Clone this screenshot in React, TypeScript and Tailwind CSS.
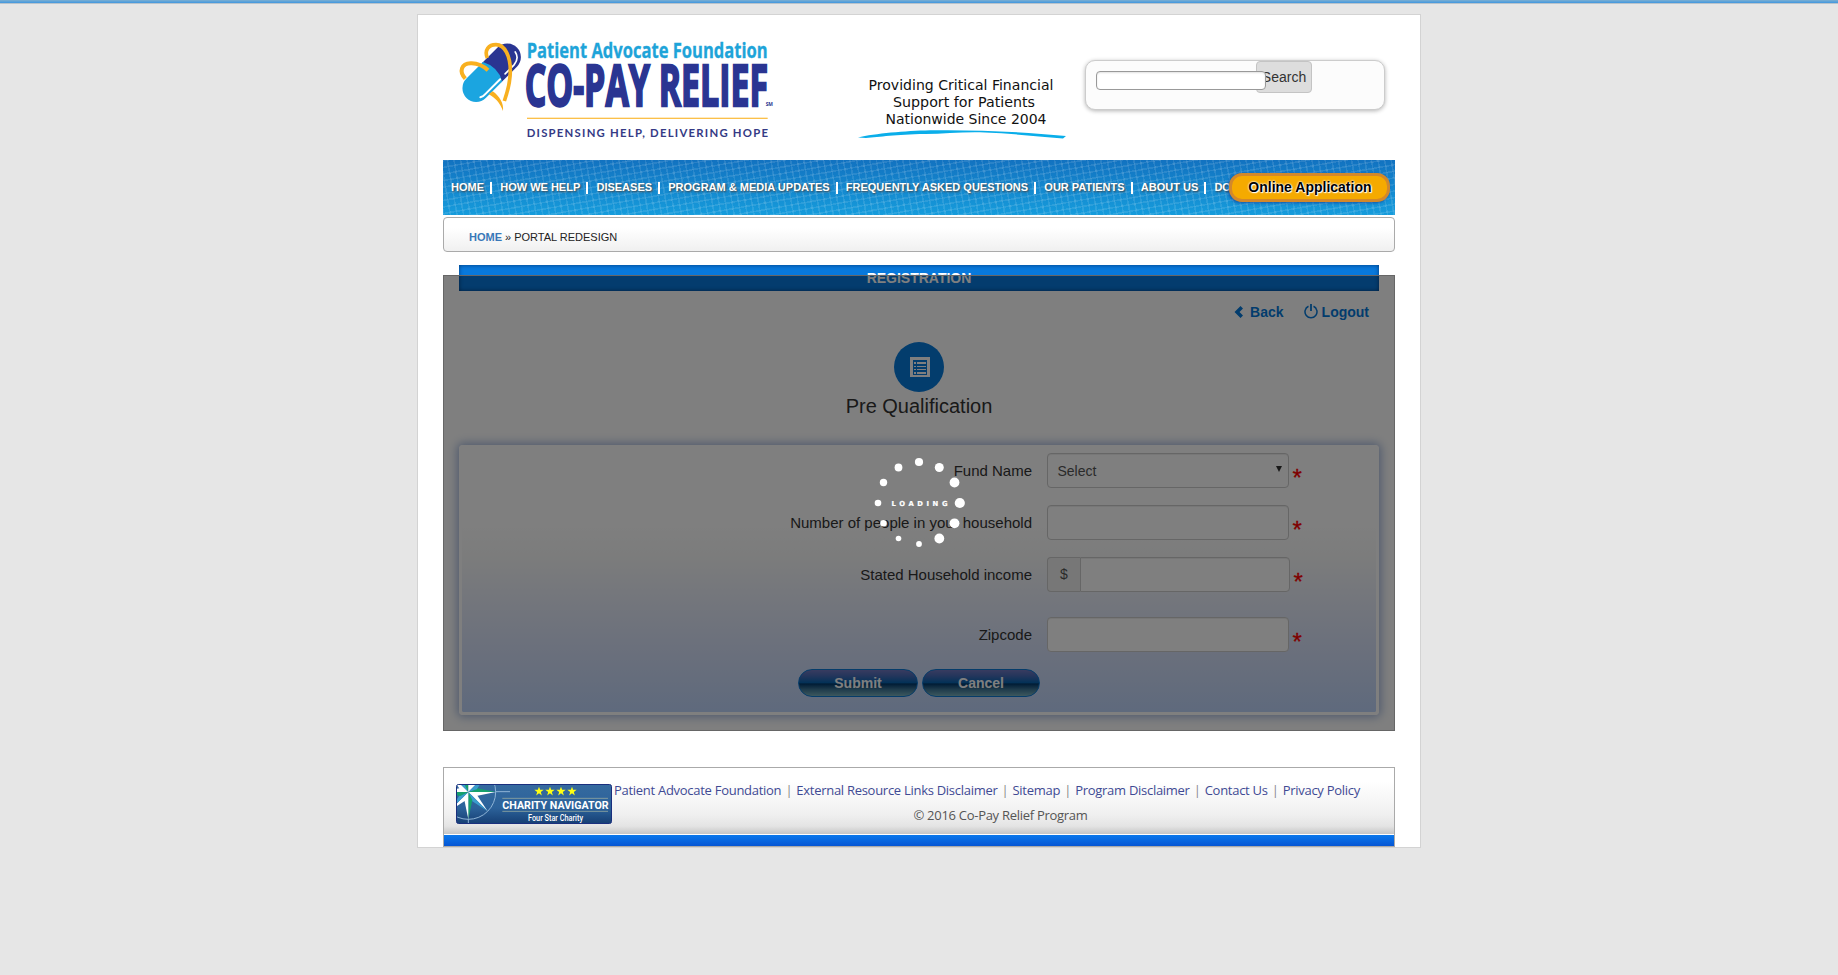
import React from "react";

const navItems: { label: string }[] = [
  { label: "HOME" },
  { label: "HOW WE HELP" },
  { label: "DISEASES" },
  { label: "PROGRAM & MEDIA UPDATES" },
  { label: "FREQUENTLY ASKED QUESTIONS" },
  { label: "OUR PATIENTS" },
  { label: "ABOUT US" },
  { label: "DO" },
];

const footerLinks = [
  "Patient Advocate Foundation",
  "External Resource Links Disclaimer",
  "Sitemap",
  "Program Disclaimer",
  "Contact Us",
  "Privacy Policy",
];

function Logo() {
  return (
    <svg width="320" height="100" viewBox="150 120 960 300" className="block shrink-0 overflow-visible">
      <g transform="translate(245 218) rotate(-45)">
        <path d="M0 -41 H66 A41 41 0 0 1 66 41 H0 Z" fill="#2a3592" />
        <path d="M4 -41 H-66 A41 41 0 0 0 -66 41 H4 Q26 0 4 -41Z" fill="#1ba5e0" />
        <path d="M-76 28 Q-68 33 -58 32 H4" stroke="#fff" strokeWidth="6" strokeLinecap="round" fill="none" />
        <path d="M26 31 H64 Q90 28 94 6" stroke="#fff" strokeWidth="5" strokeLinecap="round" fill="none" />
      </g>
      <path
        d="M232 174C222 150 236 134 258 134C284 134 301 168 301 212C301 250 291 280 283 303"
        fill="none"
        stroke="#f8b020"
        strokeWidth="11"
      />
      <path d="M166 236C146 214 154 191 182 190C204 189 220 198 234 211" fill="none" stroke="#f8b020" strokeWidth="12" />
      <path d="M236 283C254 292 270 308 279 333C282 310 268 288 248 274Z" fill="#f8b020" />
      <text x="350" y="174" textLength="723" lengthAdjust="spacingAndGlyphs" fontFamily="Open Sans" fontWeight="700" fontSize="65" fill="#1ea4d9" stroke="#1ea4d9" strokeWidth="1">
        Patient Advocate Foundation
      </text>
      <text x="344" y="318" textLength="730" lengthAdjust="spacingAndGlyphs" fontFamily="Open Sans" fontWeight="700" fontSize="173" fill="#2a3592" stroke="#2a3592" strokeWidth="7">
        CO-PAY RELIEF
      </text>
      <text x="1067" y="319" textLength="22" lengthAdjust="spacingAndGlyphs" fontFamily="Open Sans" fontWeight="700" fontSize="15" fill="#2a3592">
        SM
      </text>
      <rect x="351" y="353" width="722" height="4" fill="#fbc04a" />
      <text x="350" y="411" textLength="724" fontFamily="Lato" fontWeight="700" fontSize="34" fill="#353a85">
        DISPENSING HELP, DELIVERING HOPE
      </text>
    </svg>
  );
}

function Tagline() {
  return (
    <svg width="212" height="66" viewBox="856 76 212 66" className="block shrink-0">
      <g fontFamily="DejaVu Sans" fontSize="13.5" fill="#111">
        <text x="868.500" y="90" textLength="185" lengthAdjust="spacingAndGlyphs">Providing Critical Financial</text>
        <text x="893" y="107" textLength="142" lengthAdjust="spacingAndGlyphs">Support for Patients</text>
        <text x="885.500" y="123.500" textLength="161" lengthAdjust="spacingAndGlyphs">Nationwide Since 2004</text>
      </g>
      <path
        d="M858 137.500C875 133.500 905 131 930 130.300C970 129.500 1020 131.500 1066 136L1063 138.500C1035 136 1010 133.500 985 132.500C965 131.500 945 134 925 134C895 134.500 880 137 866 138Z"
        fill="#0aaeea"
      />
    </svg>
  );
}

function CharityBadge() {
  const rays = [0, 45, 90, 135, 180, 225, 270, 315];
  return (
    <svg width="156" height="40" viewBox="138 132 468 120" className="block shrink-0">
      <defs>
        <linearGradient id="badge" x1="0" y1="0" x2="0" y2="1">
          <stop offset="0" stopColor="#356a9f" />
          <stop offset="0.6" stopColor="#2c629a" />
          <stop offset="1" stopColor="#163f74" />
        </linearGradient>
        <clipPath id="badgeClip">
          <rect x="141" y="135" width="462" height="114" rx="3" />
        </clipPath>
      </defs>
      <rect x="139.500" y="133.500" width="465" height="117" rx="6" fill="url(#badge)" stroke="#1a2f7e" strokeWidth="3" />
      <g clipPath="url(#badgeClip)">
        <circle cx="175" cy="156" r="82" fill="none" stroke="#8fb4d6" strokeWidth="3" />
        <path d="M258 155H300M175 236V250" stroke="#8fb4d6" strokeWidth="3" />
        {rays.map((a) => (
          <g key={a} transform={`translate(175 156) rotate(${a})`}>
            <path d="M0 0L24 -12L82 0Z" fill={a % 90 === 0 ? "#16a06c" : "#fff"} />
            <path d="M0 0L24 12L82 0Z" fill={a % 90 === 0 ? "#fff" : "#3a9ccc"} />
          </g>
        ))}
      </g>
      {[387, 420, 453, 486].map((x) => (
        <path
          key={x}
          transform={`translate(${x} 154)`}
          d="M0 -14L3.500 -4.500L14 -4.500L5.500 2L8.500 12.500L0 6L-8.500 12.500L-5.500 2L-14 -4.500L-3.500 -4.500Z"
          fill="#ffff12"
        />
      ))}
      <path d="M277 175H594M277 214H594" stroke="#8fa6a0" strokeWidth="2.500" />
      <text x="277" y="207" textLength="319" lengthAdjust="spacingAndGlyphs" fontFamily="Roboto" fontWeight="700" fontSize="35" fill="#fff">
        CHARITY NAVIGATOR
      </text>
      <text x="354" y="242" textLength="165" lengthAdjust="spacingAndGlyphs" fontFamily="Roboto" fontWeight="500" fontSize="28" fill="#fff">
        Four Star Charity
      </text>
    </svg>
  );
}

function Spinner() {
  const dots: [number, number, number][] = [
    [919, 462, 4.1],
    [939.3, 467.5, 4.5],
    [954.5, 482.5, 4.9],
    [959.8, 503, 5.1],
    [954.5, 523.3, 4.9],
    [939.3, 538.5, 4.9],
    [919, 544, 2.9],
    [898.5, 538.5, 2.8],
    [883.5, 523.3, 3.2],
    [878, 503, 3.3],
    [883.5, 482.5, 3.7],
    [898.5, 467.5, 3.9],
  ];
  return (
    <svg width="100" height="100" viewBox="869 453 100 100" className="block">
      {dots.map(([cx, cy, r]) => (
        <circle key={`${cx}-${cy}`} cx={cx} cy={cy} r={r} fill="#fff" />
      ))}
      <text x="891.500" y="505.800" textLength="56" fontFamily="DejaVu Sans" fontWeight="700" fontSize="6.800" fill="#fff" stroke="#fff" strokeWidth="0.200">
        LOADING
      </text>
    </svg>
  );
}

function Field({ label, className, children }: { label: string; className: string; children: React.ReactNode }) {
  return (
    <div className={`flex h-[35px] items-center ${className}`}>
      <div className="w-[570px] text-right text-[15px] leading-5 text-[#333]">{label}</div>
      <div className="ml-[15px] flex h-[35px]">{children}</div>
      <div className="ml-[3.5px] h-[35px] pt-[11px] text-[24px] leading-[28px] text-[#f00] [-webkit-text-stroke:0.3px_#f00]">*</div>
    </div>
  );
}

const inputBox = "h-[35px] w-[242px] rounded border border-[#ccc] bg-white shadow-[inset_0_1px_1px_rgba(0,0,0,.075)]";
const pill =
  "flex h-7 items-center justify-center rounded-full border border-[#0a78d4] bg-[linear-gradient(#7078c0_0%,#4a6cb8_22%,#0a64b0_48%,#023a6c_54%,#3f7898_75%,#7ab0bc_100%)] text-[14px] font-bold text-white";

export default function App() {
  return (
    <div className="min-h-[975px] bg-[#e6e6e6] font-['Liberation_Sans',Arial,sans-serif]">
      <div className="h-1 border-b border-[#b9c3cb] bg-[linear-gradient(#72abd4_0_1px,#4a9bdd_2px_3px)]" />
      <div className="mx-auto mt-[10px] flex h-[834px] w-[1004px] flex-col border border-[#d3d3d3] bg-white px-[25px]">
        <header className="flex h-[145px] shrink-0 items-start">
          <div className="ml-[17px] pt-[25px]">
            <Logo />
          </div>
          <div className="ml-[76px] pt-[61px]">
            <Tagline />
          </div>
          <div className="mt-[45px] ml-[17px] flex h-[50px] w-[300px] items-start rounded-[10px] border border-[#ccc] bg-[#fcfcfc] pl-[10px] shadow-[0_1px_4px_rgba(0,0,0,.3)]">
            <div className="relative z-10 mt-[10px] h-[19px] w-[170px] shrink-0 rounded border border-[#999] bg-white shadow-[inset_0_1px_2px_rgba(0,0,0,.12)]" />
            <div className="-ml-[10px] flex h-8 w-14 items-center justify-center rounded border border-[#c4c4c4] bg-[#ddd] text-[14px] text-[#333]">
              Search
            </div>
          </div>
        </header>

        <nav className="flex h-[55px] shrink-0 items-center overflow-hidden bg-[repeating-linear-gradient(80deg,rgba(255,255,255,.1)_0_1.6px,transparent_1.6px_6.5px),repeating-linear-gradient(170deg,rgba(255,255,255,.1)_0_1.6px,transparent_1.6px_6.5px),linear-gradient(#1272c0,#169cdc)] pl-2">
          {navItems.map((item, i) => (
            <React.Fragment key={item.label}>
              {i > 0 && <span className="mr-[8.2px] ml-1.5 h-3 w-[2px] shrink-0 bg-white" />}
              <span className="text-[11px] font-bold whitespace-nowrap text-white [text-shadow:1px_1px_2px_#444]">{item.label}</span>
            </React.Fragment>
          ))}
          <div className="relative z-10 -ml-[1.5px] flex h-[29px] w-[161px] shrink-0 items-center justify-center rounded-[13px] border-[3px] border-[#d2882b] bg-[#f5aa00] text-[14px] font-bold whitespace-nowrap text-black shadow-[-1px_1px_3px_rgba(20,60,150,.7)] [text-shadow:0_0_2px_#fff,0_0_2px_#fff,1px_1px_1px_#fff]">
            Online Application
          </div>
        </nav>

        <div className="mt-[2px] flex h-[35px] shrink-0 items-center rounded border border-[#aaa] bg-[linear-gradient(#fff_30%,#f0f0f0)] pt-[5px] pl-[25px] text-[11px] text-[#222]">
          <span className="font-bold text-[#3878b8]">HOME</span>
          <span className="mx-[3px]">»</span>
          <span>PORTAL REDESIGN</span>
        </div>

        <main className="relative mt-[13px] h-[466px] shrink-0 px-4">
          <div className="flex h-[26px] items-center justify-center bg-[#0879dc] pt-px text-[14px] font-bold text-white shadow-[inset_0_0_4px_#013a78]">
            REGISTRATION
          </div>
          <div className="mt-[11px] flex h-5 items-center justify-end pr-[10px] text-[14px] font-bold text-[#0579da]">
            <svg width="10" height="12" viewBox="0 0 10 12" className="mr-[6px]">
              <path d="M6.500 0L9 2.500L5.500 6L9 9.500L6.500 12L0.500 6Z" fill="currentColor" />
            </svg>
            <span>Back</span>
            <svg width="14" height="15" viewBox="0 0 14 15" className="mr-1 mb-0.5 ml-5">
              <path d="M4.500 2.300A6 6 0 1 0 9.500 2.300" fill="none" stroke="currentColor" strokeWidth="1.500" />
              <path d="M7 0V7" stroke="currentColor" strokeWidth="1.800" />
            </svg>
            <span>Logout</span>
          </div>
          <div className="mt-5 flex flex-col items-center">
            <div className="flex h-[50px] w-[50px] items-center justify-center rounded-full bg-[#067adb]">
              <svg width="20" height="20" viewBox="0 0 20 20" className="ml-px">
                <path d="M0 0H20V20H0Z M3 3V18H17V3Z" fill="#fff" fillRule="evenodd" />
                <path d="M4 5H6V7H4Z M7 5H16V7H7Z M4 9H6V10H4Z M7 9H16V10H7Z M4 12H6V13H4Z M7 12H16V13H7Z M4 15H6V17H4Z M7 15H16V17H7Z" fill="#fff" />
              </svg>
            </div>
            <div className="mt-[2px] text-[20px] leading-[24px] text-[#333]">Pre Qualification</div>
          </div>

          <section className="mt-[27px] h-[270px] rounded border-[3px] border-white bg-[linear-gradient(#fff_28%,#f7f8f8_42%,#e7ecf8_58%,#d4dff8_78%,#bed4fa_100%)] bg-clip-padding pt-[5px] shadow-[0_0_10px_2px_rgba(70,110,185,.5)]">
            <Field label="Fund Name" className="">
              <div className={`${inputBox} flex items-center pr-[6px] pl-[9.5px] text-[14px] text-[#555]`}>
                <span className="flex-1 pt-px">Select</span>
                <svg width="6" height="6" viewBox="0 0 6 6" className="mb-[3px]">
                  <path d="M0 0H6L3 6Z" fill="#333" />
                </svg>
              </div>
            </Field>
            <Field label="Number of people in your household" className="mt-[17px]">
              <div className={inputBox} />
            </Field>
            <Field label="Stated Household income" className="mt-[17px]">
              <div className="flex h-[35px] w-[33px] items-center justify-center rounded-l border border-r-0 border-[#ccc] bg-[#eee] text-[14px] text-[#555]">
                $
              </div>
              <div className="h-[35px] w-[210px] rounded-r border border-[#ccc] bg-white shadow-[inset_0_1px_1px_rgba(0,0,0,.075)]" />
            </Field>
            <Field label="Zipcode" className="mt-[25px]">
              <div className={inputBox} />
            </Field>
            <div className="mt-[17px] flex justify-center gap-1">
              <div className={`${pill} w-[120px]`}>Submit</div>
              <div className={`${pill} w-[118px]`}>Cancel</div>
            </div>
          </section>

          <div className="absolute inset-x-0 top-[10px] bottom-0 z-20 flex items-center justify-center border border-[#666] bg-black/50">
            <Spinner />
          </div>
        </main>

        <footer className="mt-9 flex h-[80px] shrink-0 flex-col border border-[#aaa]">
          <div className="flex h-[66px] items-start bg-[linear-gradient(#fff_20%,#f0f0f0_70%,#e4e4e4_88%,#c6c6c6_100%)] pt-4 pl-3">
            <CharityBadge />
            <div className="ml-[2px] w-[746px] font-['Open_Sans',sans-serif] text-[13px] leading-5 -tracking-[0.28px]">
              <div className="-mt-[4px] flex justify-between whitespace-nowrap text-[#3f4a94]">
                {footerLinks.map((link, i) => (
                  <React.Fragment key={link}>
                    {i > 0 && <span className="text-[#888]">|</span>}
                    <span>{link}</span>
                  </React.Fragment>
                ))}
              </div>
              <div className="mt-[5px] pl-[27px] text-center text-[#555]">© 2016 Co-Pay Relief Program</div>
            </div>
          </div>
          <div className="h-[12px] border-t border-white bg-[linear-gradient(#0a78ec,#0656d4)]" />
        </footer>
      </div>
    </div>
  );
}
